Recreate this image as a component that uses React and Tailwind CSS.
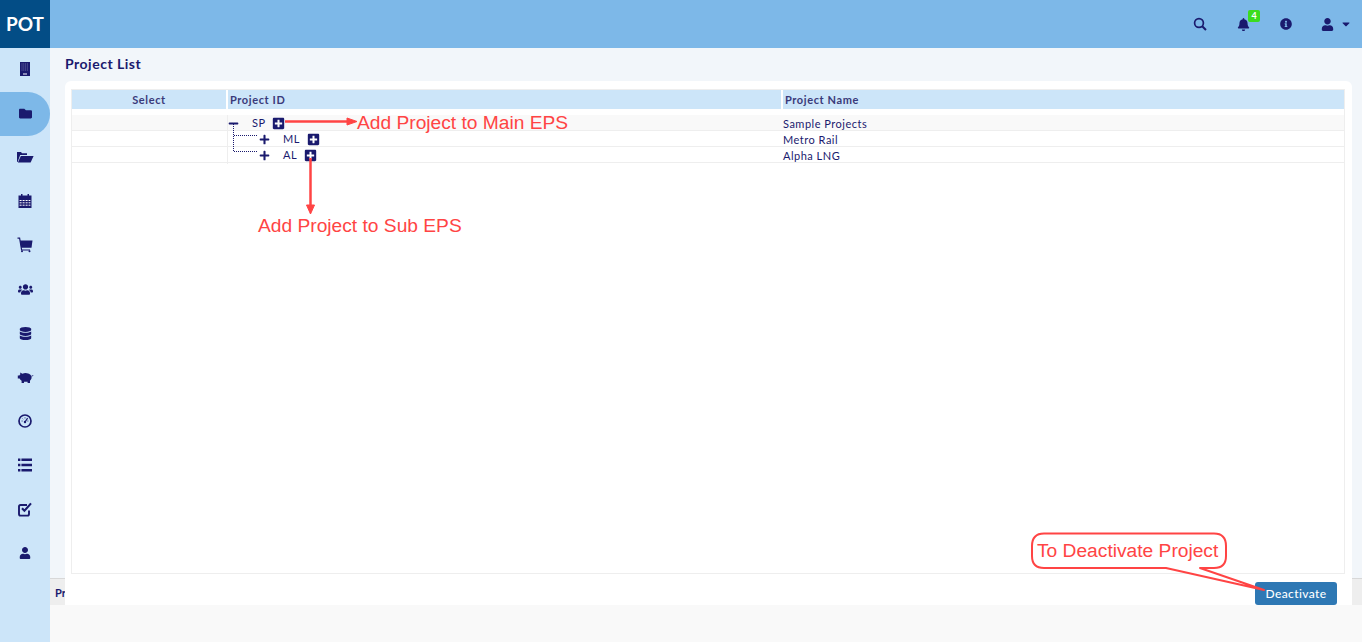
import React from "react";
import { FaFolder, FaUsers, FaDatabase, FaUser, FaBell, FaInfoCircle, FaCaretDown, FaPlus, FaMinus, FaPlusSquare } from "react-icons/fa";

const C = "#1a1a6e";
const Svg = ({ children }) => (
  <svg width="20" height="20" viewBox="0 0 20 20" fill={C}>{children}</svg>
);
const Building = () => (
  <Svg>
    <path d="M5 3h10v14H5z" />
    <path d="M6.5 5h7M6.5 7h7M6.5 9h7M6.5 11h7" stroke="#8a8ab8" strokeWidth="0.8" strokeDasharray="1 0.8" />
    <path d="M8 14h4v2H8z" fill="#8a8ab8" />
  </Svg>
);
const FolderOpen = () => (
  <Svg>
    <path d="M2 15V5h4l1 1.2h5V8H5.2L2.6 15z" />
    <path d="M5.8 9H18.6L15.6 15.6H2.9z" />
  </Svg>
);
const Calendar = () => (
  <Svg>
    <path d="M3.5 4.5h13V17h-13z" />
    <path d="M6 3h1.5v3H6zM12.5 3H14v3h-1.5z" />
    <path d="M4.6 9.5h10.8M4.6 11.8h10.8M4.6 14.2h10.8" stroke="#ffffff" strokeWidth="1" strokeDasharray="2 1" />
  </Svg>
);
const Cart = () => (
  <Svg>
    <path d="M2.5 3.2H4.6L6.6 15H15" fill="none" stroke={C} strokeWidth="1.2" />
    <path d="M5 5.5h12.5l-1 7.3H6.2z" />
    <circle cx="7" cy="16.2" r="1" />
    <circle cx="14.5" cy="16.2" r="1" />
  </Svg>
);
const Piggy = () => (
  <Svg>
    <path d="M5 5.5l2.5 1.2A7 7 0 0 1 12 6.2c3 .3 4.6 2.3 4.6 4.3 0 1.4-.8 2.5-1.6 3.2V16h-2.4v-1.3H9V16H6.6v-2.2C5.6 13.2 5 12.4 4.6 11.6H2.8V8.6h1.6c.3-.6.6-1 1-1.4z" />
    <path d="M16.4 9.2c1 0 1.4-.4 1.6-1" fill="none" stroke={C} strokeWidth="0.9" />
  </Svg>
);
const Dashboard = () => (
  <Svg>
    <circle cx="10" cy="10" r="6" fill="none" stroke={C} strokeWidth="1.7" />
    <path d="M10 11L12.6 7.2" stroke={C} strokeWidth="1.2" />
    <circle cx="10" cy="11" r="1.2" />
    <path d="M6.6 10h1M12.4 10h1M10 6.4v1M7.5 7.6l.6.6" stroke={C} strokeWidth="0.9" />
  </Svg>
);
const List = () => (
  <Svg>
    <path d="M3 3.5h2.4v2.6H3zM3 8.7h2.4v2.6H3zM3 13.9h2.4v2.6H3z" />
    <path d="M6.4 3.5h10.6v2.6H6.4zM6.4 8.7h10.6v2.6H6.4zM6.4 13.9h10.6v2.6H6.4z" />
  </Svg>
);
const Check = () => (
  <Svg>
    <path d="M14 11.5V15a1.6 1.6 0 0 1-1.6 1.6H5.6A1.6 1.6 0 0 1 4 15V7.6A1.6 1.6 0 0 1 5.6 6H12" fill="none" stroke={C} strokeWidth="1.9" />
    <path d="M7 9.3l2.4 2.5L16 4.4" fill="none" stroke={C} strokeWidth="2.1" />
  </Svg>
);
const Search = () => (
  <svg width="14" height="14" viewBox="0 0 14 14" fill="none" stroke={C}>
    <circle cx="6" cy="6" r="4.4" strokeWidth="1.7" />
    <path d="M9.2 9.2L13 13" strokeWidth="2" />
  </svg>
);

const NAV = [
  <Building />,
  <FaFolder className="text-[13px]" />,
  <FolderOpen />,
  <Calendar />,
  <Cart />,
  <FaUsers className="text-[15px]" />,
  <FaDatabase className="text-[13px]" />,
  <Piggy />,
  <Dashboard />,
  <List />,
  <Check />,
  <FaUser className="text-[12px]" />,
];

function Row({ first, indent, id, name, gap, children }) {
  return (
    <div className={`grid h-4 grid-cols-[156px_555px_1fr] border-b border-[#eeeeee] ${first ? "bg-[#f9f9f9]" : ""}`}>
      <div className="border-r border-[#eeeeee]" />
      <div className={`flex items-center ${indent}`}>
        {children}
        <span className="text-[11px] tracking-[0.5px] text-[#1a1a6e]">{id}</span>
        <FaPlusSquare className={`text-[13px] text-[#1a1a6e] ${gap}`} />
      </div>
      <div className="pt-px text-[11px] leading-4 tracking-[0.5px] text-[#1a1a6e]">{name}</div>
    </div>
  );
}

export default function App() {
  return (
    <div className="relative flex h-[642px] w-[1362px] overflow-hidden bg-[#f9f9f9] font-['Lato',sans-serif]">
      <aside className="flex w-[50px] shrink-0 flex-col bg-[#cce5f9]">
        <div className="flex h-12 items-center justify-center bg-[#034d86] text-[19px] font-bold text-white">POT</div>
        <nav className="flex flex-col">
          {NAV.map((icon, i) => (
            <div key={i} className={`flex h-11 items-center justify-center pb-[2px] text-[#1a1a6e] ${i === 1 ? "rounded-r-[22px] bg-[#7db8e8]" : ""}`}>
              {icon}
            </div>
          ))}
        </nav>
      </aside>
      <div className="flex min-w-0 flex-1 flex-col">
        <header className="flex h-12 shrink-0 items-center justify-end bg-[#7db8e8] pr-[10px] text-[13px] text-[#1a1a6e]">
          <div className="mr-[30px]"><Search /></div>
          <div className="relative mr-[30px]">
            <FaBell />
            <span className="absolute -right-[10px] -top-[8px] flex h-3 w-3 items-center justify-center rounded-[2px] bg-[#3cdc1e] text-[9px] font-bold leading-none text-white">4</span>
          </div>
          <FaInfoCircle className="mr-[29px] text-[12px]" />
          <FaUser className="mr-[6px]" />
          <FaCaretDown className="text-[12px]" />
        </header>
        <main className="flex h-[530px] shrink-0 flex-col bg-[#f2f6fa] pl-[15px] pr-[10px]">
          <h1 className="mt-2 h-[25px] shrink-0 text-[14px] font-bold leading-4 tracking-[0.5px] text-[#1a1a6e]">Project List</h1>
          <section className="relative z-10 flex h-[524px] shrink-0 flex-col rounded-t-md bg-white pl-[6px] pr-[7px] pt-[8px]">
            <div className="h-[485px] border border-[#eeeeee]">
              <div className="grid h-[19px] grid-cols-[156px_555px_1fr] bg-[#cce5f9] text-[11px] font-bold leading-[19px] tracking-[0.6px] text-[#3a3a7a]">
                <div className="border-r-2 border-white text-center">Select</div>
                <div className="border-r-2 border-white pl-[2px]">Project ID</div>
                <div className="pl-[2px]">Project Name</div>
              </div>
              <div className="h-[6px]" />
              <Row first indent="pl-0" id="SP" name="Sample Projects" gap="ml-[6px]">
                <FaMinus className="mr-[13px] text-[11px] text-[#1a1a6e]" />
              </Row>
              <Row indent="pl-[31px]" id="ML" name="Metro Rail" gap="ml-[7px]">
                <FaPlus className="mr-[13px] text-[11px] text-[#1a1a6e]" />
              </Row>
              <Row indent="pl-[31px]" id="AL" name="Alpha LNG" gap="ml-[7px]">
                <FaPlus className="mr-[13px] text-[11px] text-[#1a1a6e]" />
              </Row>
            </div>
            <div className="flex justify-end pr-[8px] pt-[8px]">
              <button className="h-[23px] w-[82px] rounded-[3px] bg-[#2e78b4] text-[12px] font-medium tracking-[0.4px] text-white">Deactivate</button>
            </div>
          </section>
        </main>
        <footer className="h-[27px] shrink-0 border-t border-[#d8d8d8] bg-[#eeeeee] pl-[5px] text-[11px] font-bold leading-[27px] text-[#1a1a6e]">Pr</footer>
      </div>

      <svg className="pointer-events-none absolute inset-0 z-20" width="1362" height="642" fill="none" stroke="#ff4444">
        <path d="M233.5 124V151.5H258M233.5 135.5H258" stroke="#1a1a6e" strokeDasharray="1 1" shapeRendering="crispEdges" />
        <path d="M285 121.5H350" strokeWidth="2.5" />
        <path d="M357 121.5L347 118V125Z" fill="#ff4444" />
        <path d="M310.5 158V207" strokeWidth="2.5" />
        <path d="M310.5 214L306.5 205H314.5Z" fill="#ff4444" />
        <path d="M1166 568H1044Q1032 568 1032 556V546Q1032 533.5 1044 533.5H1214Q1226 533.5 1226 546V556Q1226 568 1214 568H1200L1264 590L1166 568Z" fill="white" strokeWidth="2" strokeLinejoin="round" />
      </svg>
      <span className="absolute left-[357px] top-[112px] z-20 font-['Liberation_Sans',sans-serif] text-[19.2px] leading-[21px] text-[#ff4444]">Add Project to Main EPS</span>
      <span className="absolute left-[258px] top-[215px] z-20 font-['Liberation_Sans',sans-serif] text-[19.2px] leading-[21px] text-[#ff4444]">Add Project to Sub EPS</span>
      <span className="absolute left-[1037px] top-[540px] z-20 font-['Liberation_Sans',sans-serif] text-[19.2px] leading-[21px] text-[#ff4444]">To Deactivate Project</span>
    </div>
  );
}
